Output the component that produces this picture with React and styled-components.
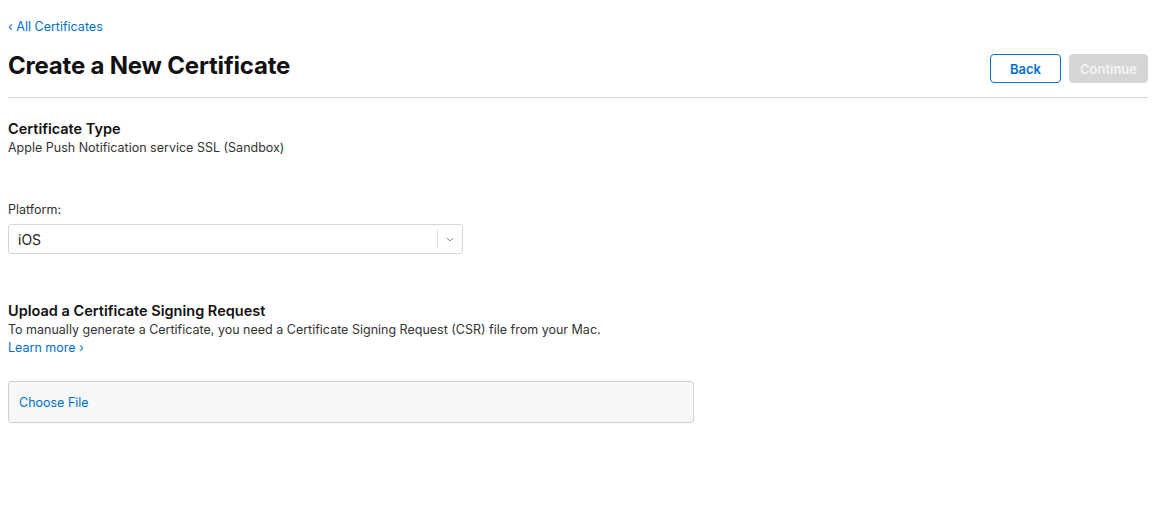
import React from 'react'
import styled, { createGlobalStyle } from 'styled-components'

const GlobalStyle = createGlobalStyle`
  html, body {
    margin: 0;
    padding: 0;
    background: #fff;
  }
  body {
    font-family: Inter, "Liberation Sans", sans-serif;
    color: #1d1d1f;
    -webkit-font-smoothing: antialiased;
  }
`

const Page = styled.div`
  padding: 17px 16px 0 8px;
  height: 510px;
  box-sizing: border-box;
`

const BackLink = styled.a`
  display: block;
  width: max-content;
  font-size: 12.5px;
  color: #0070c9;
  text-decoration: none;
  line-height: 20px;
`

const Header = styled.div`
  display: flex;
  align-items: flex-start;
  justify-content: space-between;
  padding: 14px 0 14px;
  border-bottom: 1px solid #d6d6d6;
`

const Title = styled.h1`
  margin: 0;
  font-size: 24px;
  font-weight: 700;
  letter-spacing: -0.2px;
  color: #111;
  line-height: 30px;
`

const Actions = styled.div`
  display: flex;
  gap: 8px;
  margin-top: 3px;
`

const Button = styled.button`
  height: 29px;
  padding: 0 ${p => (p.$primary ? '10px' : '19px')};
  border-radius: 4px;
  font-family: inherit;
  font-size: 13px;
  font-weight: 600;
  border: 1px solid ${p => (p.$primary ? '#d5d5d5' : '#0070c9')};
  background: ${p => (p.$primary ? '#d5d5d5' : '#fff')};
  color: ${p => (p.$primary ? '#f4f4f4' : '#0070c9')};
`

const Section = styled.section`
  margin-top: ${p => p.$top || 0}px;
`

const SectionTitle = styled.h2`
  margin: 0;
  font-size: 14.5px;
  font-weight: 600;
  color: #111;
  line-height: 20px;
`

const Text = styled.p`
  margin: 0;
  font-size: 12.5px;
  color: #333;
  line-height: 18px;
`

const Label = styled.label`
  display: block;
  font-size: 12.5px;
  color: #333;
  line-height: 18px;
  margin-bottom: 5px;
`

const Select = styled.div`
  width: 455px;
  height: 30px;
  box-sizing: border-box;
  border: 1px solid #d6d6d6;
  border-radius: 3px;
  display: flex;
  align-items: center;
`

const SelectValue = styled.span`
  flex: 1;
  padding-left: 9px;
  font-size: 14px;
  color: #222;
`

const SelectArrow = styled.span`
  width: 24px;
  height: 18px;
  border-left: 1px solid #e0e0e0;
  display: flex;
  align-items: center;
  justify-content: center;
`

const Link = styled.a`
  display: block;
  width: max-content;
  font-size: 12.5px;
  color: #0070c9;
  text-decoration: none;
  line-height: 18px;
`

const FileBox = styled.div`
  margin-top: 24px;
  width: 686px;
  height: 42px;
  box-sizing: border-box;
  border: 1px solid #cfcfcf;
  border-radius: 3px;
  background: #f6f7f7;
  display: flex;
  align-items: center;
  padding-left: 10px;
  font-size: 12.5px;
  color: #0070c9;
`

export default function App() {
  return (
    <>
      <GlobalStyle />
      <Page>
        <BackLink href="#">‹ All Certificates</BackLink>
        <Header>
          <Title>Create a New Certificate</Title>
          <Actions>
            <Button>Back</Button>
            <Button $primary disabled>Continue</Button>
          </Actions>
        </Header>

        <Section $top={21}>
          <SectionTitle>Certificate Type</SectionTitle>
          <Text>Apple Push Notification service SSL (Sandbox)</Text>
        </Section>

        <Section $top={44}>
          <Label>Platform:</Label>
          <Select>
            <SelectValue>iOS</SelectValue>
            <SelectArrow>
              <svg width="8" height="5" viewBox="0 0 8 5">
                <path d="M1 1l3 3 3-3" fill="none" stroke="#888" strokeWidth="1" />
              </svg>
            </SelectArrow>
          </Select>
        </Section>

        <Section $top={47}>
          <SectionTitle>Upload a Certificate Signing Request</SectionTitle>
          <Text>To manually generate a Certificate, you need a Certificate Signing Request (CSR) file from your Mac.</Text>
          <Link href="#">Learn more ›</Link>
          <FileBox>Choose File</FileBox>
        </Section>
      </Page>
    </>
  )
}
